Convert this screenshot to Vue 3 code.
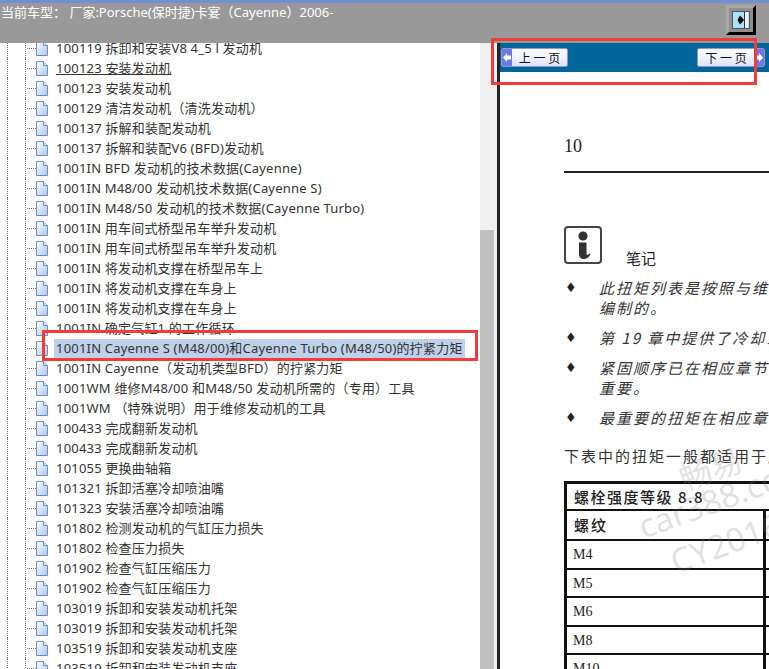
<script setup>
const rows = [
  "100119 拆卸和安装V8 4_5 l 发动机",
  "100123 安装发动机",
  "100123 安装发动机",
  "100129 清洁发动机（清洗发动机）",
  "100137 拆解和装配发动机",
  "100137 拆解和装配V6 (BFD)发动机",
  "1001IN BFD 发动机的技术数据(Cayenne)",
  "1001IN M48/00 发动机技术数据(Cayenne S)",
  "1001IN M48/50 发动机的技术数据(Cayenne Turbo)",
  "1001IN 用车间式桥型吊车举升发动机",
  "1001IN 用车间式桥型吊车举升发动机",
  "1001IN 将发动机支撑在桥型吊车上",
  "1001IN 将发动机支撑在车身上",
  "1001IN 将发动机支撑在车身上",
  "1001IN 确定气缸1 的工作循环",
  "1001IN Cayenne S (M48/00)和Cayenne Turbo (M48/50)的拧紧力矩",
  "1001IN Cayenne（发动机类型BFD）的拧紧力矩",
  "1001WM 维修M48/00 和M48/50 发动机所需的（专用）工具",
  "1001WM （特殊说明）用于维修发动机的工具",
  "100433 完成翻新发动机",
  "100433 完成翻新发动机",
  "101055 更换曲轴箱",
  "101321 拆卸活塞冷却喷油嘴",
  "101323 安装活塞冷却喷油嘴",
  "101802 检测发动机的气缸压力损失",
  "101802 检查压力损失",
  "101902 检查气缸压缩压力",
  "101902 检查气缸压缩压力",
  "103019 拆卸和安装发动机托架",
  "103019 拆卸和安装发动机托架",
  "103519 拆卸和安装发动机支座",
  "103519 拆卸和安装发动机支座",
];
const selected = 15;
const hovered = 1;

const notes = [
  ["此扭矩列表是按照与维修手册相关的内容", "编制的。"],
  ["第 19 章中提供了冷却系统的扭矩"],
  ["紧固顺序已在相应章节中说明，非常", "重要。"],
  ["最重要的扭矩在相应章节中给出"],
];
const sizes = ["M4", "M5", "M6", "M8", "M10"];
</script>

<template>
  <div class="app">
    <header class="topbar">
      <span class="model">当前车型： 厂家:Porsche(保时捷)卡宴（Cayenne）2006-</span>
      <button class="toggle">
        <svg width="18" height="18" viewBox="0 0 18 18">
          <rect x="0.5" y="0.5" width="17" height="17" fill="#a9e2fb" stroke="#555" />
          <rect x="13" y="1" width="3" height="16" fill="#f4f4f4" />
          <rect x="12" y="1" width="1" height="16" fill="#333" />
          <path d="M8 4.5L12 9L8 13.5L5.5 9Z" fill="#000" />
        </svg>
      </button>
    </header>

    <div class="body">
      <section class="tree">
        <div v-for="(row, i) in rows" :key="i" class="row">
          <span class="guide"></span>
          <span class="guide"></span>
          <span class="dash"></span>
          <svg class="doc" width="12" height="15" viewBox="0 0 12 15">
            <defs>
              <linearGradient id="docfill" x1="0" y1="0" x2="1" y2="1">
                <stop offset="0" stop-color="#ffffff" />
                <stop offset="1" stop-color="#a9c4ec" />
              </linearGradient>
            </defs>
            <path d="M0.5 0.5H7.5L11.5 4.5V14.5H0.5Z" fill="url(#docfill)" stroke="#6f8fc0" />
            <path d="M7.5 0.5V4.5H11.5" fill="#dfe9f8" stroke="#6f8fc0" />
          </svg>
          <span class="label" :class="{ sel: i === selected, hover: i === hovered }">{{ row }}</span>
        </div>
      </section>

      <div class="scrollbar"><div class="thumb"></div></div>
      <div class="divider"></div>

      <section class="page">
        <nav class="pager">
          <button class="pg prev">
            <span class="arrow">
              <svg width="10" height="17" viewBox="0 0 10 17"><path d="M1 8.5L5 4V6.5H9V10.5H5V13Z" fill="#fff" /></svg>
            </span>
            <span class="pg-text">上 一 页</span>
          </button>
          <button class="pg next">
            <span class="pg-text">下 一 页</span>
            <span class="arrow">
              <svg width="10" height="17" viewBox="0 0 10 17"><path d="M9 8.5L5 4V6.5H1V10.5H5V13Z" fill="#fff" /></svg>
            </span>
          </button>
        </nav>
        <div class="doc-body">
          <div class="chapter">10</div>
          <div class="note-head">
            <div class="info-box">
              <svg width="34" height="34" viewBox="0 0 34 34">
                <circle cx="17" cy="8" r="4.6" fill="#333" />
                <path d="M13 14.5H20.5V25C20.5 27 21.5 27.5 23.5 25.5L24.5 26.5C22.5 30 19.5 31.5 16.5 31C14 30.5 13 28.5 13 26Z" fill="#333" />
              </svg>
            </div>
            <span class="note-title">笔记</span>
          </div>
          <ul class="notes">
            <li v-for="(n, i) in notes" :key="i">
              <span class="bullet">♦</span>
              <span class="note-text"><span v-for="l in n" :key="l" class="line">{{ l }}</span></span>
            </li>
          </ul>
          <p class="intro">下表中的扭矩一般都适用于所有螺栓连接</p>
          <div class="table">
            <div class="t-title">螺栓强度等级 8.8</div>
            <div class="t-row t-head"><span class="t-cell">螺纹</span></div>
            <div v-for="s in sizes" :key="s" class="t-row"><span class="t-cell mono">{{ s }}</span></div>
          </div>
          <div class="watermark">
            <span class="wm-a">畅易</span>
            <span class="wm-b">car388.cc</span>
            <span class="wm-c">CY2016</span>
          </div>
        </div>
      </section>
    </div>

    <div class="mark mark-nav"></div>
    <div class="mark mark-row"></div>
  </div>
</template>

<style>
html, body {
  margin: 0;
  background: #fff;
}
</style>

<style scoped>
.app {
  position: relative;
  width: 769px;
  height: 669px;
  overflow: hidden;
  display: flex;
  flex-direction: column;
  font-family: "Noto Sans", "Noto Sans CJK SC", sans-serif;
}
.topbar {
  height: 43px;
  box-sizing: border-box;
  flex: none;
  display: flex;
  justify-content: space-between;
  align-items: flex-start;
  padding: 1px 13px 0 1px;
  background: #999999;
  border-top: 3px solid #6f8fd6;
  color: #fff;
  font-size: 13px;
  line-height: 16px;
}
.toggle {
  width: 30px;
  height: 30px;
  padding: 0;
  margin-top: 1px;
  background: #8f8f8f;
  border: 3px solid;
  border-color: #a8a8a8 #000 #000 #a8a8a8;
  display: flex;
  align-items: center;
  justify-content: center;
}
.body {
  flex: 1;
  min-height: 0;
  display: flex;
}
.tree {
  width: 480px;
  flex: none;
  overflow: hidden;
  padding-left: 7px;
  box-sizing: border-box;
}
.row {
  height: 20px;
  display: flex;
  align-items: center;
  white-space: nowrap;
  font-size: 13px;
  letter-spacing: 0.2px;
  color: #333;
}
.row:first-child {
  margin-top: -5px;
}
.guide {
  width: 18px;
  height: 20px;
  box-sizing: border-box;
  border-left: 1px dotted #777;
  flex: none;
}
.dash {
  width: 9px;
  margin-left: -16px;
  flex: none;
  border-top: 1px dotted #777;
}
.doc {
  flex: none;
}
.label {
  margin-left: 6px;
  padding: 0 2px;
  line-height: 19px;
}
.label.sel {
  background: #bfd0e9;
}
.label.hover {
  text-decoration: underline;
}
.scrollbar {
  width: 14px;
  flex: none;
  background: #f0f0f0;
  padding-top: 187px;
  box-sizing: border-box;
}
.thumb {
  height: 100%;
  background: #c0c0c0;
}
.divider {
  width: 6px;
  box-sizing: border-box;
  flex: none;
  background: #f0f0f0;
  border-right: 3px solid #222;
}
.page {
  flex: 1;
  min-width: 0;
  overflow: hidden;
  position: relative;
}
.pager {
  height: 29px;
  background: #006699;
  display: flex;
  justify-content: space-between;
  align-items: center;
  padding: 0 4px 0 1px;
}
.pg {
  height: 19px;
  padding: 0;
  display: flex;
  align-items: center;
  background: linear-gradient(#ffffff, #dfe3fb);
  border: 1px solid #8d95d8;
  border-radius: 2px;
  color: #111;
  font-family: "Noto Sans CJK SC", sans-serif;
  font-size: 12px;
}
.prev { width: 67px; }
.next { width: 68px; }
.pg-text {
  flex: 1;
  text-align: center;
  white-space: nowrap;
}
.arrow {
  width: 10px;
  height: 100%;
  background: #6d78e0;
  display: flex;
}
.doc-body {
  position: relative;
  padding: 0 0 0 64px;
  color: #222;
  font-family: "Noto Sans CJK SC", sans-serif;
  white-space: nowrap;
}
.chapter {
  font-family: "Liberation Serif", serif;
  font-size: 18px;
  line-height: 22px;
  padding-top: 63px;
  padding-bottom: 14px;
  border-bottom: 2px solid #222;
}
.note-head {
  display: flex;
  align-items: flex-end;
  margin-top: 53px;
  gap: 24px;
}
.info-box {
  width: 38px;
  height: 38px;
  box-sizing: border-box;
  border: 2px solid #444;
  border-radius: 4px;
}
.note-title {
  font-size: 15px;
  line-height: 18px;
  margin-bottom: -3px;
}
.notes {
  list-style: none;
  margin: 14px 0 0;
  padding: 0;
}
.notes li {
  display: flex;
  margin-bottom: 10px;
}
.bullet {
  width: 35px;
  flex: none;
  padding-left: 1px;
  box-sizing: border-box;
  font-family: "DejaVu Sans", sans-serif;
  font-size: 13px;
  line-height: 20px;
}
.note-text {
  font-style: italic;
  font-size: 15px;
  letter-spacing: 2px;
  line-height: 20px;
  color: #333;
}
.line {
  display: block;
}
.intro {
  margin: 18px 0 0;
  font-size: 15px;
  letter-spacing: 2px;
  line-height: 20px;
  color: #333;
}
.table {
  margin-top: 15px;
  width: 240px;
  border: solid #111;
  border-width: 3px 0 0 3px;
}
.t-title {
  height: 27px;
  box-sizing: border-box;
  padding-left: 7px;
  border-bottom: 2px solid #111;
  font-size: 15px;
  font-weight: 500;
  letter-spacing: 1.5px;
  line-height: 26px;
}
.t-row {
  height: 28.5px;
  box-sizing: border-box;
  border-bottom: 2px solid #111;
  display: flex;
}
.t-head {
  height: 30px;
}
.t-cell {
  width: 199px;
  box-sizing: border-box;
  padding-left: 7px;
  border-right: 3px solid #111;
  font-size: 15px;
  font-weight: 500;
  letter-spacing: 2px;
  line-height: 28px;
}
.t-cell.mono {
  padding-left: 6px;
  font-family: "Liberation Serif", serif;
  font-size: 14px;
  font-weight: 400;
  letter-spacing: 0;
}
.watermark {
  position: absolute;
  left: 0;
  top: 0;
  width: 100%;
  height: 669px;
  pointer-events: none;
  color: rgba(120, 120, 120, 0.22);
}
.watermark span {
  position: absolute;
  transform: rotate(-20deg);
  font-family: "Noto Sans", "Noto Sans CJK SC", sans-serif;
  white-space: nowrap;
}
.wm-a {
  left: 178px;
  top: 372px;
  font-size: 32px;
}
.wm-b {
  left: 135px;
  top: 408px;
  font-size: 33px;
}
.wm-c {
  left: 168px;
  top: 448px;
  font-size: 33px;
}
.mark {
  position: absolute;
  box-sizing: border-box;
  border: 3px solid #f23c3c;
  pointer-events: none;
}
.mark-nav {
  left: 491px;
  top: 38px;
  width: 266px;
  height: 47px;
}
.mark-row {
  left: 42px;
  top: 330px;
  width: 436px;
  height: 31px;
}
</style>
